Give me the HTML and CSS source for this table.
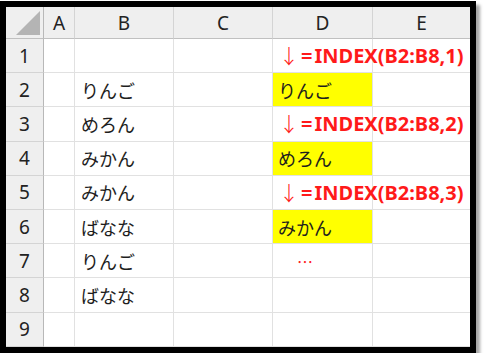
FILE: index.html
```html
<!DOCTYPE html>
<html lang="ja">
<head>
<meta charset="utf-8">
<link rel="stylesheet" href="styles.css">
</head>
<body>
<div class="frame">
  <div class="sheet">
    <div class="hd corner"><svg width="26" height="25" viewBox="0 0 26 25"><polygon points="25,0 25,24 1,24" fill="#b4b4b4"/></svg></div>
    <div class="hd col">A</div>
    <div class="hd col">B</div>
    <div class="hd col">C</div>
    <div class="hd col">D</div>
    <div class="hd col last">E</div>

    <div class="hd row">1</div><div class="c"></div><div class="c"></div><div class="c"></div><div class="c f"><span class="arr">↓</span><span class="eq">=</span>INDEX(B2:B8,1)</div><div class="c last"></div>
    <div class="hd row">2</div><div class="c"></div><div class="c t">りんご</div><div class="c"></div><div class="c t y">りんご</div><div class="c last"></div>
    <div class="hd row">3</div><div class="c"></div><div class="c t">めろん</div><div class="c"></div><div class="c f"><span class="arr">↓</span><span class="eq">=</span>INDEX(B2:B8,2)</div><div class="c last"></div>
    <div class="hd row">4</div><div class="c"></div><div class="c t">みかん</div><div class="c"></div><div class="c t y">めろん</div><div class="c last"></div>
    <div class="hd row">5</div><div class="c"></div><div class="c t">みかん</div><div class="c"></div><div class="c f"><span class="arr">↓</span><span class="eq">=</span>INDEX(B2:B8,3)</div><div class="c last"></div>
    <div class="hd row">6</div><div class="c"></div><div class="c t">ばなな</div><div class="c"></div><div class="c t y">みかん</div><div class="c last"></div>
    <div class="hd row">7</div><div class="c"></div><div class="c t">りんご</div><div class="c"></div><div class="c dots">…</div><div class="c last"></div>
    <div class="hd row">8</div><div class="c"></div><div class="c t">ばなな</div><div class="c"></div><div class="c"></div><div class="c last"></div>
    <div class="hd row">9</div><div class="c"></div><div class="c"></div><div class="c"></div><div class="c"></div><div class="c last"></div>
  </div>
</div>
</body>
</html>
```
FILE: styles.css
```css
html, body {
  margin: 0;
  padding: 0;
  background: #ffffff;
}
body {
  font-family: "Noto Sans CJK JP", "Noto Sans", sans-serif;
  color: #1e1e1e;
}
.frame {
  margin-top: 1px;
  width: 464px;
  height: 340px;
  border: 6px solid #000;
  box-shadow: 4px 4px 3px rgba(0, 0, 0, 0.35);
  overflow: hidden;
  background: #fff;
}
.sheet {
  display: grid;
  grid-template-columns: 38px 31px 99px 99px 100px 97px;
  grid-template-rows: 32px repeat(9, 34.2px);
}
.hd {
  background: #efefef;
  border-right: 1px solid #d4d4d4;
  border-bottom: 1px solid #c0c0c0;
  display: flex;
  align-items: center;
  justify-content: center;
  font-size: 19px;
  color: #222;
  font-family: "Noto Sans", "Noto Sans CJK JP", sans-serif;
}
.hd.corner {
  border-right: 1px solid #b8b8b8;
  justify-content: flex-start;
  align-items: flex-start;
  padding: 4px 0 0 9px;
  box-sizing: border-box;
}
.hd.row {
  border-right: 1px solid #b8b8b8;
  border-bottom: 1px solid #d4d4d4;
}
.c {
  border-right: 1px solid #e1e1e1;
  border-bottom: 1px solid #e1e1e1;
  display: flex;
  align-items: center;
  white-space: nowrap;
  font-size: 18px;
}
.last {
  border-right: none;
}
.t {
  padding-left: 6px;
}
.y {
  background: #ffff00;
  padding-left: 5px;
}
.f {
  color: #ff1a1a;
  font-family: "Noto Sans", "Noto Sans CJK JP", sans-serif;
  font-weight: bold;
  font-size: 20px;
  padding-left: 6px;
  overflow: visible;
}
.arr {
  font-family: "Noto Sans CJK JP", sans-serif;
  font-weight: 300;
  font-size: 20px;
  margin-right: 2px;
}
.eq {
  margin-right: 2px;
}
.dots {
  color: #ff1a1a;
  padding-left: 24px;
  font-size: 16px;
}
```
